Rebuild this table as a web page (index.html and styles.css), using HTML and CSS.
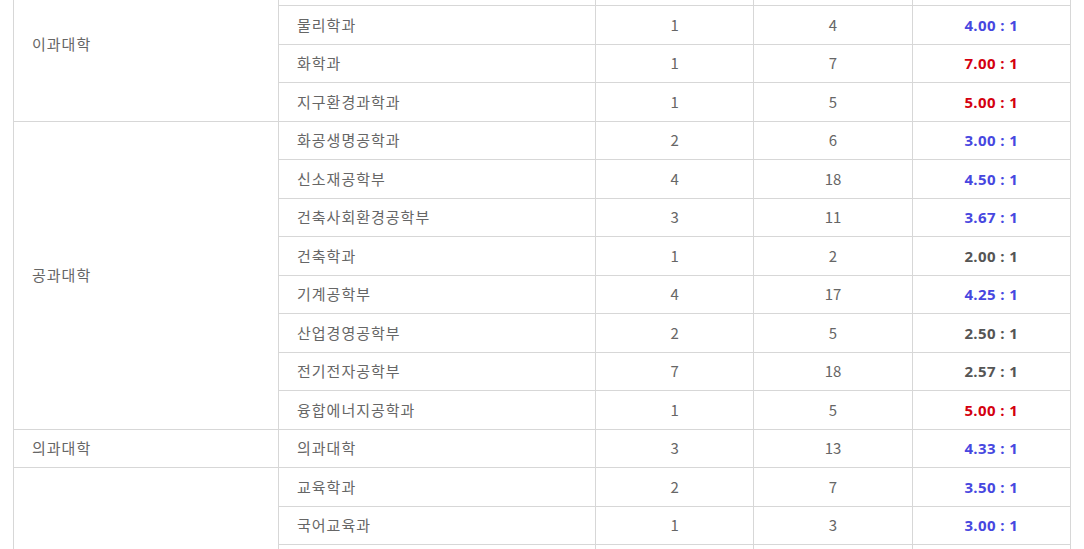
FILE: index.html
```html
<!DOCTYPE html>
<html lang="ko">
<head>
    <meta charset="UTF-8">
    <meta name="viewport" content="width=device-width, initial-scale=1.0">
    <title>모집단위별 경쟁률</title>
    <link rel="stylesheet" href="styles.css">
</head>
<body>
    <div class="rate-wrap">
        <table class="rate-table">
            <colgroup>
                <col class="col-college">
                <col class="col-dept">
                <col class="col-num">
                <col class="col-num">
                <col class="col-num">
            </colgroup>
            <tbody>
                <tr>
                    <td class="college" rowspan="4">이과대학</td>
                    <td class="dept">수학과</td>
                    <td>2</td>
                    <td>6</td>
                    <td class="ratio">3.00 : 1</td>
                </tr>
                <tr>
                    <td class="dept">물리학과</td>
                    <td>1</td>
                    <td>4</td>
                    <td class="ratio blue">4.00 : 1</td>
                </tr>
                <tr>
                    <td class="dept">화학과</td>
                    <td>1</td>
                    <td>7</td>
                    <td class="ratio red">7.00 : 1</td>
                </tr>
                <tr>
                    <td class="dept">지구환경과학과</td>
                    <td>1</td>
                    <td>5</td>
                    <td class="ratio red">5.00 : 1</td>
                </tr>
                <tr>
                    <td class="college" rowspan="8">공과대학</td>
                    <td class="dept">화공생명공학과</td>
                    <td>2</td>
                    <td>6</td>
                    <td class="ratio blue">3.00 : 1</td>
                </tr>
                <tr>
                    <td class="dept">신소재공학부</td>
                    <td>4</td>
                    <td>18</td>
                    <td class="ratio blue">4.50 : 1</td>
                </tr>
                <tr>
                    <td class="dept">건축사회환경공학부</td>
                    <td>3</td>
                    <td>11</td>
                    <td class="ratio blue">3.67 : 1</td>
                </tr>
                <tr>
                    <td class="dept">건축학과</td>
                    <td>1</td>
                    <td>2</td>
                    <td class="ratio">2.00 : 1</td>
                </tr>
                <tr>
                    <td class="dept">기계공학부</td>
                    <td>4</td>
                    <td>17</td>
                    <td class="ratio blue">4.25 : 1</td>
                </tr>
                <tr>
                    <td class="dept">산업경영공학부</td>
                    <td>2</td>
                    <td>5</td>
                    <td class="ratio">2.50 : 1</td>
                </tr>
                <tr>
                    <td class="dept">전기전자공학부</td>
                    <td>7</td>
                    <td>18</td>
                    <td class="ratio">2.57 : 1</td>
                </tr>
                <tr>
                    <td class="dept">융합에너지공학과</td>
                    <td>1</td>
                    <td>5</td>
                    <td class="ratio red">5.00 : 1</td>
                </tr>
                <tr>
                    <td class="college">의과대학</td>
                    <td class="dept">의과대학</td>
                    <td>3</td>
                    <td>13</td>
                    <td class="ratio blue">4.33 : 1</td>
                </tr>
                <tr>
                    <td class="college" rowspan="6">사범대학</td>
                    <td class="dept">교육학과</td>
                    <td>2</td>
                    <td>7</td>
                    <td class="ratio blue">3.50 : 1</td>
                </tr>
                <tr>
                    <td class="dept">국어교육과</td>
                    <td>1</td>
                    <td>3</td>
                    <td class="ratio blue">3.00 : 1</td>
                </tr>
                <tr>
                    <td class="dept">영어교육과</td>
                    <td>1</td>
                    <td>4</td>
                    <td class="ratio blue">4.00 : 1</td>
                </tr>
                <tr>
                    <td class="dept">수학교육과</td>
                    <td>1</td>
                    <td>3</td>
                    <td class="ratio blue">3.00 : 1</td>
                </tr>
                <tr>
                    <td class="dept">역사교육과</td>
                    <td>1</td>
                    <td>2</td>
                    <td class="ratio">2.00 : 1</td>
                </tr>
                <tr>
                    <td class="dept">체육교육과</td>
                    <td>2</td>
                    <td>5</td>
                    <td class="ratio">2.50 : 1</td>
                </tr>
            </tbody>
        </table>
    </div>
</body>
</html>
```

FILE: styles.css
```css
body {
    font-family: "Noto Sans CJK KR", "Noto Sans", sans-serif;
    margin: 0;
    padding: 0 13px;
    background-color: #fff;
    color: #666;
    overflow: hidden;
}
.rate-wrap {
    margin-top: -33.5px;
}
.rate-table {
    width: 100%;
    border-collapse: collapse;
    table-layout: fixed;
    font-size: 15px;
}
.col-college {
    width: 265px;
}
.col-dept {
    width: 317px;
}
.rate-table td {
    border: 1px solid #d7d7d7;
    height: 38.5px;
    padding: 0 18px;
    text-align: center;
    line-height: 20px;
    box-sizing: border-box;
}
.rate-table td.college,
.rate-table td.dept {
    text-align: left;
    letter-spacing: 1px;
}
.ratio {
    font-family: "Open Sans", "Noto Sans", sans-serif;
    font-weight: 700;
    letter-spacing: 0.4px;
    color: #555;
}
.ratio.blue {
    color: #4747e0;
}
.ratio.red {
    color: #d4000f;
}
```
